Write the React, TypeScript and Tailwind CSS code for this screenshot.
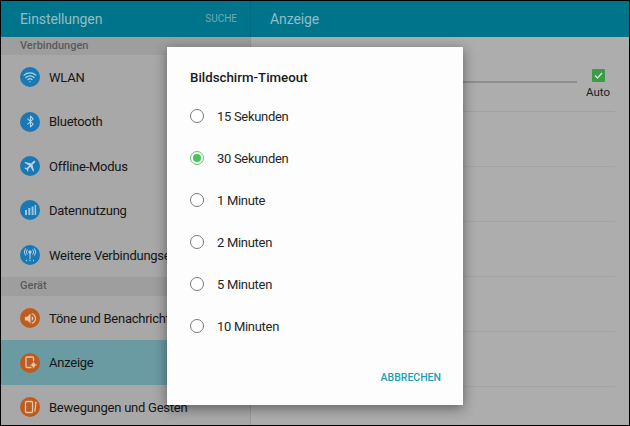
import { Bluetooth, Wifi } from 'lucide-react'
import { MdAirplanemodeActive, MdVolumeUp } from 'react-icons/md'
import type { ReactNode } from 'react'

const font = { fontFamily: 'Roboto, sans-serif' }

function BarsIcon() {
  return (
    <svg viewBox="0 0 20 20" className="w-5 h-5" fill="#9cc4dc">
      <rect x="5" y="10" width="2" height="5" />
      <rect x="8.3" y="8" width="2" height="7" />
      <rect x="11.6" y="6.5" width="2" height="8.5" />
      <rect x="14.6" y="5" width="1.6" height="10" />
    </svg>
  )
}

function AntennaIcon() {
  return (
    <svg viewBox="0 0 20 20" className="w-5 h-5" fill="none" stroke="#b4d3e6" strokeWidth="1">
      <circle cx="10" cy="7" r="1.2" fill="#b4d3e6" />
      <path d="M10 8v6" />
      <path d="M7.4 4.5a3.6 3.6 0 0 0 0 5M12.6 4.5a3.6 3.6 0 0 1 0 5" />
      <path d="M5.6 3.4a6 6 0 0 0 0 7.2M14.4 3.4a6 6 0 0 1 0 7.2" />
      <path d="M6 15.5h1M9.500 15.500h1M13 15.500h1" strokeWidth="1.400" />
    </svg>
  )
}

function DisplayIcon() {
  return (
    <svg viewBox="0 0 20 20" className="w-5 h-5" fill="none" stroke="#e6c6b0" strokeWidth="1.300">
      <path d="M11.500 14.500H7a1 1 0 0 1-1-1V5a1 1 0 0 1 1-1h5.500a1 1 0 0 1 1 1v3" />
      <circle cx="13.500" cy="12" r="2" fill="#e6c6b0" stroke="none" />
      <path d="M13.500 8.800v1M13.500 14.200v1M10.500 12h1M15.500 12h1" />
    </svg>
  )
}

function MotionIcon() {
  return (
    <svg viewBox="0 0 20 20" className="w-5 h-5" fill="none" stroke="#e6c6b0" strokeWidth="1.300">
      <rect x="5.500" y="4.500" width="7" height="11" rx="1" />
      <path d="M14.800 5.500h1.200l-1.200 9" />
    </svg>
  )
}

function MenuRow({ icon, label, tone, active }: { icon: ReactNode; label: string; tone: 'blue' | 'orange'; active?: boolean }) {
  return (
    <div className={`h-[44.4px] flex items-center pl-[19px] shrink-0 ${active ? 'bg-[#6a9aa2]' : ''}`}>
      <span
        className={`w-5 h-5 rounded-full flex items-center justify-center shrink-0 ${tone === 'blue' ? 'bg-[#1a78b4] text-[#b4d3e6]' : 'bg-[#bd5c1e] text-[#e6c6b0]'}`}
      >
        {icon}
      </span>
      <span className="ml-[9px] pt-px text-[13px] tracking-[-0.25px] text-[#161616] whitespace-nowrap">{label}</span>
    </div>
  )
}

function SectionTitle({ children, height }: { children: string; height: string }) {
  return (
    <div className={`${height} bg-[#9e9e9e] pl-[19px] flex items-center text-[11px] font-medium text-[#5a5a5a] shrink-0`}>
      {children}
    </div>
  )
}

function Radio({ label, checked }: { label: string; checked?: boolean }) {
  return (
    <div className="h-[42px] flex items-center">
      <span
        className={`w-[14px] h-[14px] rounded-full border flex items-center justify-center bg-white ${checked ? 'border-[#5cc96c]' : 'border-[#7a7a7a]'}`}
      >
        {checked && <span className="w-2 h-2 rounded-full bg-[#46c45a]" />}
      </span>
      <span className="ml-[13px] pt-px text-[13px] tracking-[-0.3px] text-[#262626]">{label}</span>
    </div>
  )
}

export default function App() {
  return (
    <div style={font} className="relative w-[630px] h-[426px] border border-black overflow-hidden bg-[#adadad]">
      {/* top bar */}
      <div className="flex h-9 bg-[#00748a]">
        <div className="w-[250px] flex items-center justify-between pl-[19px] pr-[13px] pb-px border-r border-[#006a7e]">
          <span className="text-sm tracking-[-0.1px] text-[#93bcc6]">Einstellungen</span>
          <span className="text-[10px] text-[#72aab6]">SUCHE</span>
        </div>
        <div className="flex-1 flex items-center pl-[19px] pb-px text-sm tracking-[-0.1px] text-[#93bcc6]">Anzeige</div>
      </div>

      <div className="flex h-[388px]">
        {/* left menu */}
        <div className="w-[250px] bg-[#a8a8a8] border-r border-[#999999] flex flex-col overflow-hidden">
          <SectionTitle height="h-[18px]">Verbindungen</SectionTitle>
          <MenuRow tone="blue" label="WLAN" icon={<Wifi size={14} strokeWidth={2.200} />} />
          <MenuRow tone="blue" label="Bluetooth" icon={<Bluetooth size={13} strokeWidth={2} />} />
          <MenuRow tone="blue" label="Offline-Modus" icon={<MdAirplanemodeActive size={15} className="rotate-45" />} />
          <MenuRow tone="blue" label="Datennutzung" icon={<BarsIcon />} />
          <MenuRow tone="blue" label="Weitere Verbindungseinstellungen" icon={<AntennaIcon />} />
          <SectionTitle height="h-[19px]">Gerät</SectionTitle>
          <MenuRow tone="orange" label="Töne und Benachrichtigungen" icon={<MdVolumeUp size={15} />} />
          <MenuRow tone="orange" active label="Anzeige" icon={<DisplayIcon />} />
          <MenuRow tone="orange" label="Bewegungen und Gesten" icon={<MotionIcon />} />
        </div>

        {/* right pane, mostly covered by the dialog */}
        <div className="flex-1 pl-[19px] pr-[14px] flex flex-col">
          <div className="h-[75px] flex border-b border-[#a2a2a2] shrink-0">
            <div className="flex-1 h-[2px] bg-[#8e8e8e] mt-[44px]" />
            <div className="w-[37px] ml-[1px] pl-[3px] pt-[32px] flex flex-col items-center">
              <span className="w-[13px] h-[13px] rounded-[1px] bg-[#3f9a48] flex items-center justify-center">
                <svg viewBox="0 0 13 13" className="w-[13px] h-[13px]" fill="none" stroke="#cfe6d0" strokeWidth="1.400">
                  <path d="M3 6.500l2.500 2.500 4.500-5" />
                </svg>
              </span>
              <span className="text-[11.500px] text-[#1c1c1c] leading-4 mt-[2px]">Auto</span>
            </div>
          </div>
          <div className="h-[55px] border-b border-[#a4a4a4] shrink-0" />
          <div className="h-[55px] border-b border-[#a4a4a4] shrink-0" />
          <div className="h-[55px] border-b border-[#a4a4a4] shrink-0" />
          <div className="h-[55px] border-b border-[#a4a4a4] shrink-0" />
          <div className="h-[55px] border-b border-[#a4a4a4] shrink-0" />
        </div>
      </div>

      {/* timeout dialog */}
      <div className="absolute left-[166px] top-[46px] w-[296px] h-[358px] bg-[#fdfdfd] shadow-[0_3px_12px_rgba(0,0,0,0.45)] pl-[23px] pr-[22px]">
        <div className="h-[48px] pt-[21px] text-[13.300px] font-medium leading-5 text-[#1a1a1a]">Bildschirm-Timeout</div>
        <div>
          <Radio label="15 Sekunden" />
          <Radio checked label="30 Sekunden" />
          <Radio label="1 Minute" />
          <Radio label="2 Minuten" />
          <Radio label="5 Minuten" />
          <Radio label="10 Minuten" />
        </div>
        <div className="mt-[23px] text-right text-[10.500px] font-medium text-[#1a9fb8]">ABBRECHEN</div>
      </div>
    </div>
  )
}
